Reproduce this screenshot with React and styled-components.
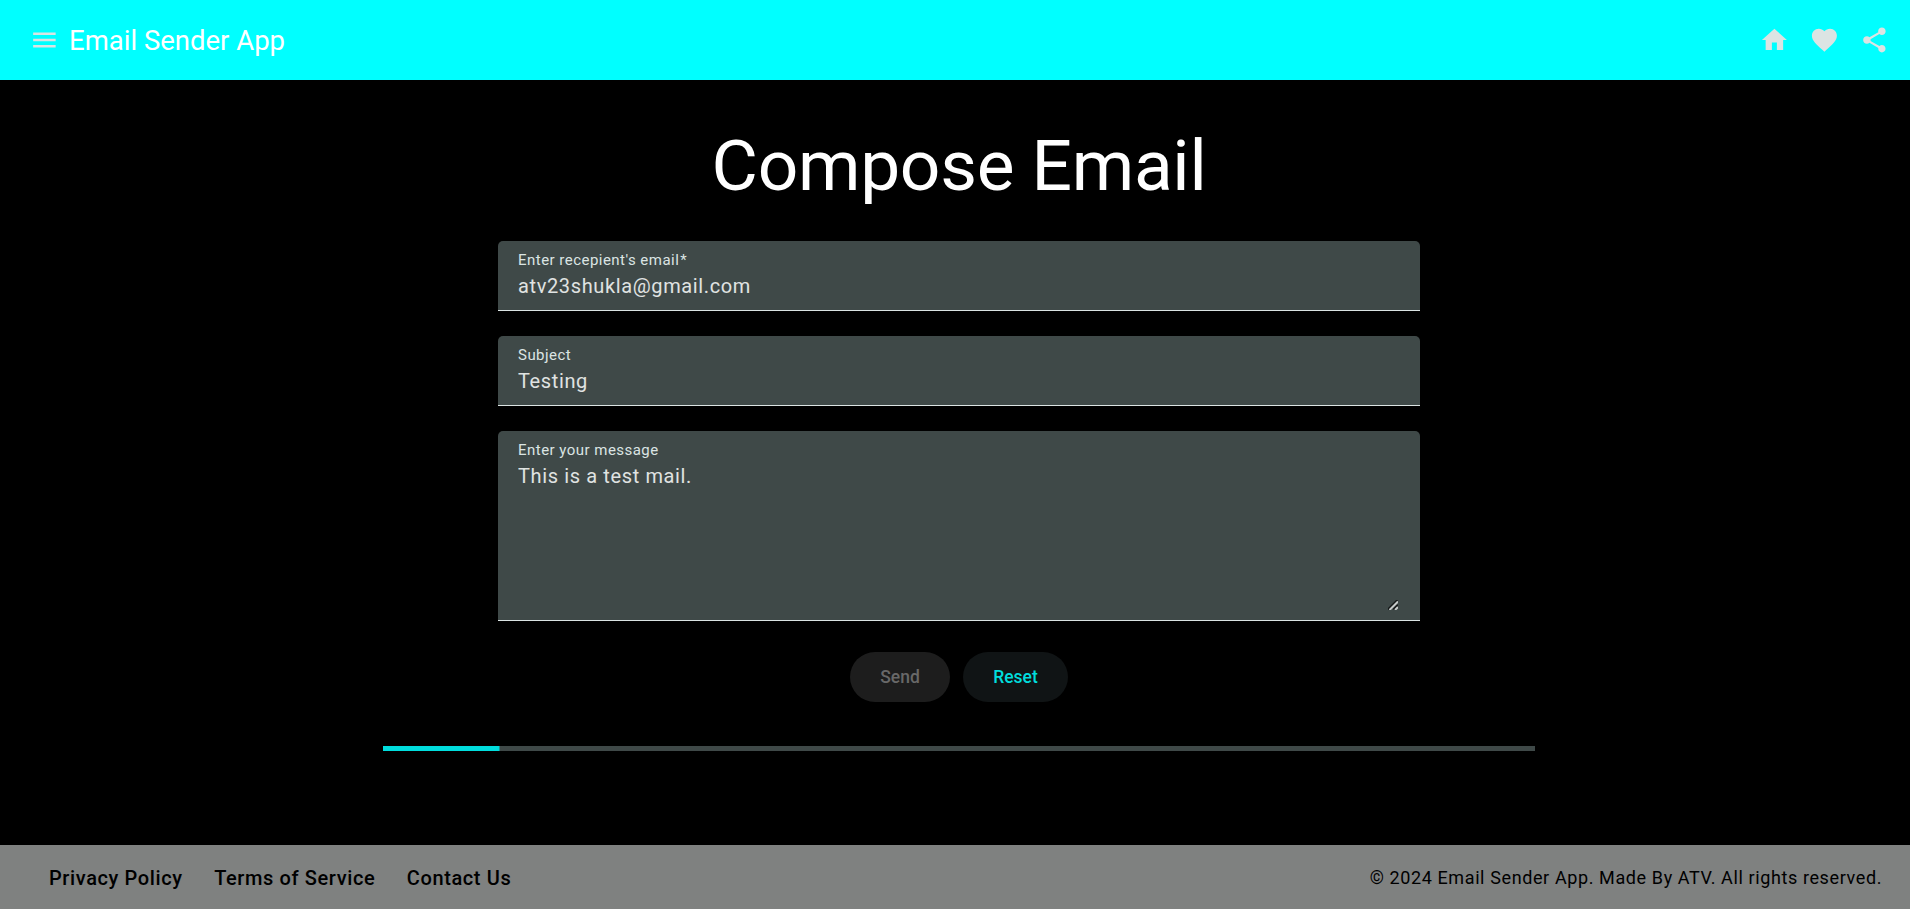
import React from 'react';
import styled, { createGlobalStyle } from 'styled-components';
import { MdMenu, MdHome, MdFavorite, MdShare } from 'react-icons/md';

const GlobalStyle = createGlobalStyle`
  * { box-sizing: border-box; }
  body {
    margin: 0;
    background: #000;
    font-family: Roboto, "Liberation Sans", sans-serif;
  }
`;

const Page = styled.div`
  display: flex;
  flex-direction: column;
  height: 100vh;
  overflow: hidden;
`;

const Toolbar = styled.header`
  flex: none;
  display: flex;
  align-items: center;
  justify-content: space-between;
  height: 80px;
  padding: 0 11px 0 19px;
  background: #00ffff;
  color: #fff;
`;

const ToolbarGroup = styled.div`
  display: flex;
  align-items: center;
`;

const IconButton = styled.button`
  display: grid;
  place-items: center;
  width: 50px;
  height: 50px;
  padding: 0;
  border: 0;
  background: none;
  color: #dbe4e3;
  svg {
    display: block;
    width: 30px;
    height: 30px;
    transform: translateX(0.4px);
  }
`;

const AppTitle = styled.span`
  font-size: 27.5px;
  line-height: 35px;
  white-space: nowrap;
`;

const Main = styled.main`
  flex: 1;
  display: flex;
  flex-direction: column;
  align-items: center;
  padding-left: 8px;
`;

const Heading = styled.h1`
  margin: 46px 0 35px;
  color: #fff;
  font-weight: 400;
  font-size: 71.25px;
  line-height: 80px;
  letter-spacing: -0.3px;
`;

const Form = styled.form`
  display: flex;
  flex-direction: column;
  gap: 25px;
  width: 922px;
`;

const Field = styled.label`
  position: relative;
  display: flex;
  flex-direction: column;
  height: ${({ $height }) => $height}px;
  padding: 10px 20px 0;
  border-bottom: 1px solid #dbe4e3;
  border-radius: 5px 5px 0 0;
  background: #3f4948;
`;

const FieldLabel = styled.span`
  color: #dbe4e3;
  font-size: 15px;
  line-height: 18px;
  letter-spacing: 0.47px;
`;

const RequiredMark = styled.span`
  margin-left: 1px;
`;

const controlStyle = `
  margin: 2px 0 0;
  padding: 0;
  border: 0;
  outline: 0;
  background: none;
  color: #e0e3e2;
  font: 400 20px/30px Roboto, "Liberation Sans", sans-serif;
  letter-spacing: 0.625px;
`;

const TextInput = styled.input`
  ${controlStyle}
  height: 30px;
`;

const MessageInput = styled.textarea`
  ${controlStyle}
  flex: 1;
  resize: none;
  overflow: hidden;
`;

const ResizeGrip = styled.svg`
  position: absolute;
  right: 22px;
  bottom: 10px;
  width: 10px;
  height: 10px;
`;

const Actions = styled.div`
  display: flex;
  justify-content: center;
  gap: 13px;
  margin-top: 6px;
`;

const PillButton = styled.button`
  width: ${({ $width }) => $width}px;
  height: 50px;
  padding: 0;
  border: 0;
  border-radius: 25px;
  background: ${({ $muted }) => ($muted ? '#1d1d1d' : '#101415')};
  color: ${({ $muted }) => ($muted ? '#686868' : '#00dddd')};
  font: 500 17.5px/25px Roboto, "Liberation Sans", sans-serif;
`;

const ProgressTrack = styled.div`
  width: 1152px;
  height: 5px;
  margin-top: 44px;
  background: #3f4948;
`;

const ProgressFill = styled.div`
  height: 100%;
  background: #00dddd;
  transform: scaleX(0.1011);
  transform-origin: left center;
`;

const Footer = styled.footer`
  flex: none;
  display: flex;
  align-items: center;
  justify-content: space-between;
  height: 64px;
  padding: 2px 28px 0 49px;
  background: #7f8180;
  color: #000;
`;

const FooterLinks = styled.nav`
  display: flex;
  gap: 31.5px;
`;

const FooterLink = styled.a`
  color: #000;
  font-size: 20px;
  font-weight: 500;
  line-height: 30px;
  letter-spacing: 0.61px;
`;

const Copyright = styled.span`
  font-size: 18px;
  font-weight: 400;
  line-height: 30px;
  letter-spacing: 0.61px;
`;

export default function App() {
  return (
    <Page>
      <GlobalStyle />
      <Toolbar>
        <ToolbarGroup>
          <IconButton aria-label="Menu"><MdMenu /></IconButton>
          <AppTitle>Email Sender App</AppTitle>
        </ToolbarGroup>
        <ToolbarGroup>
          <IconButton aria-label="Home"><MdHome /></IconButton>
          <IconButton aria-label="Favorite"><MdFavorite /></IconButton>
          <IconButton aria-label="Share"><MdShare /></IconButton>
        </ToolbarGroup>
      </Toolbar>
      <Main>
        <Heading>Compose Email</Heading>
        <Form>
          <Field $height={70}>
            <FieldLabel>Enter recepient's email<RequiredMark>*</RequiredMark></FieldLabel>
            <TextInput defaultValue="atv23shukla@gmail.com" spellCheck={false} />
          </Field>
          <Field $height={70}>
            <FieldLabel>Subject</FieldLabel>
            <TextInput defaultValue="Testing" spellCheck={false} />
          </Field>
          <Field $height={190}>
            <FieldLabel>Enter your message</FieldLabel>
            <MessageInput defaultValue="This is a test mail." spellCheck={false} />
            <ResizeGrip viewBox="0 0 10 10" aria-hidden="true">
              <path d="M0 9.5 9.5 0M5.5 9.5 10 5" stroke="#151818" strokeWidth="2" />
              <path d="M1.5 10 10 1.5M7 10 10 7" stroke="#c5c9c8" strokeWidth="2" />
            </ResizeGrip>
          </Field>
          <Actions>
            <PillButton type="button" $width={100} $muted disabled>Send</PillButton>
            <PillButton type="button" $width={105}>Reset</PillButton>
          </Actions>
        </Form>
        <ProgressTrack><ProgressFill /></ProgressTrack>
      </Main>
      <Footer>
        <FooterLinks>
          <FooterLink>Privacy Policy</FooterLink>
          <FooterLink>Terms of Service</FooterLink>
          <FooterLink>Contact Us</FooterLink>
        </FooterLinks>
        <Copyright>© 2024 Email Sender App. Made By ATV. All rights reserved.</Copyright>
      </Footer>
    </Page>
  );
}
